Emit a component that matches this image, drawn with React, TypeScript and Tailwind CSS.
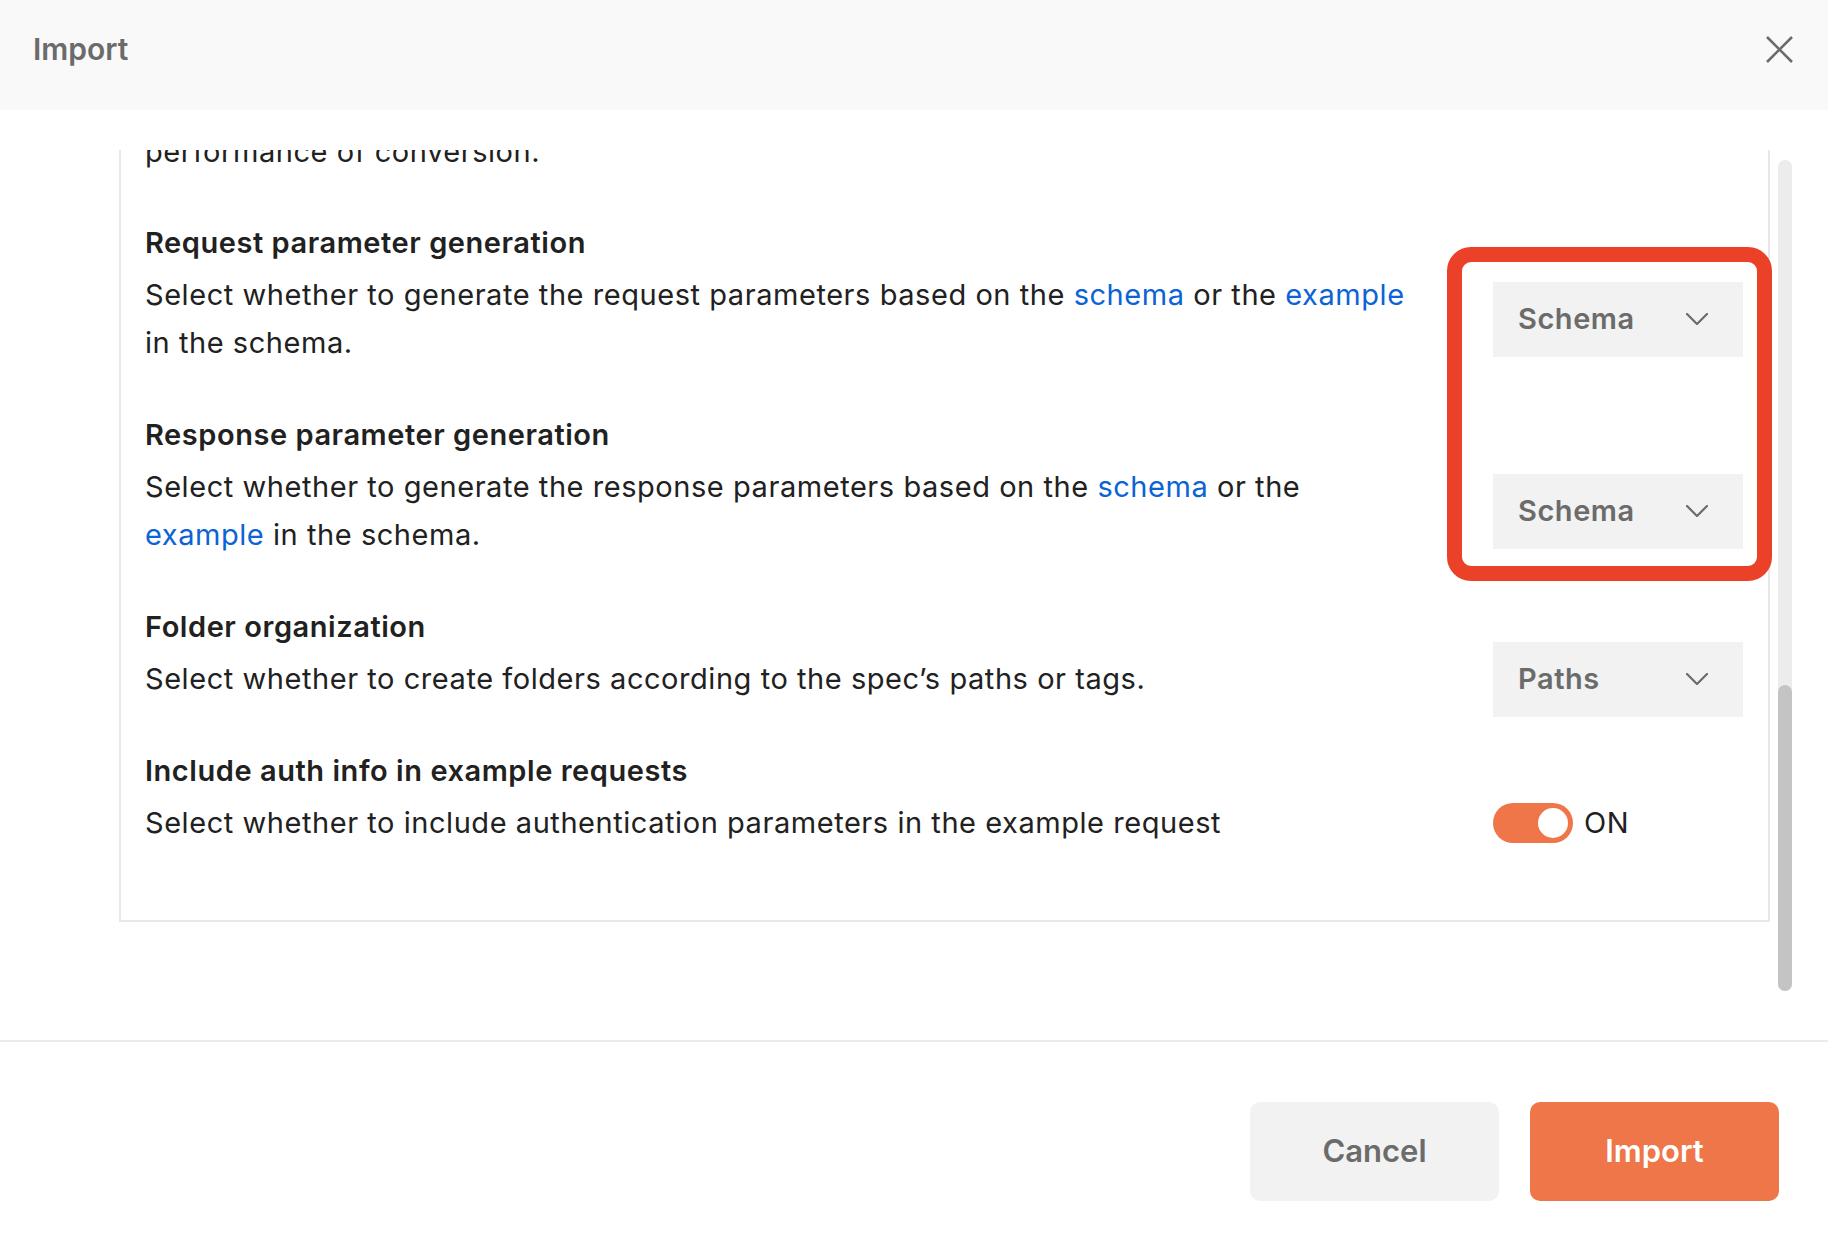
import React from "react";

function Chevron() {
  return (
    <svg width="22" height="12" viewBox="0 0 22 12" fill="none">
      <path d="M1 1 L11 11 L21 1" stroke="#6b6b6b" strokeWidth="2.2" strokeLinecap="round" strokeLinejoin="round" />
    </svg>
  );
}

function Dropdown({ label }: { label: string }) {
  return (
    <div className="flex h-[75px] w-[250px] items-center justify-between bg-[#f2f2f2] pl-[25px] pr-[35px]">
      <span className="text-[29px] font-semibold tracking-[0.55px] text-[#6b6b6b]">{label}</span>
      <Chevron />
    </div>
  );
}

function Link({ children }: { children: React.ReactNode }) {
  return <span className="text-[#0b63d6]">{children}</span>;
}

function Row({
  title,
  children,
  control,
}: {
  title: string;
  children: React.ReactNode;
  control: React.ReactNode;
}) {
  return (
    <div className="flex items-center">
      <div className="w-[1268px] pb-12">
        <div className="text-[29px] font-semibold leading-[40px] tracking-[0.55px] text-[#212121]">{title}</div>
        <div className="mt-2 text-[29px] leading-[48px] tracking-[0.55px] text-[#212121]">{children}</div>
      </div>
      <div className="flex-1" />
      <div className="w-[250px]">{control}</div>
    </div>
  );
}

export default function App() {
  return (
    <div className="relative h-[1250px] w-full overflow-hidden bg-white font-['Inter','Noto_Sans',sans-serif]">
      {/* Header */}
      <div className="flex h-[110px] items-center justify-between bg-[#f9f9f9] pb-[12px] pl-[33px] pr-[35px]">
        <span className="text-[30px] font-semibold text-[#6b6b6b]">Import</span>
        <svg width="27" height="27" viewBox="0 0 27 27" fill="none">
          <path d="M1 1 L26 26 M26 1 L1 26" stroke="#6b6b6b" strokeWidth="2.6" />
        </svg>
      </div>

      {/* Scroll area */}
      <div className="mt-10 h-[890px] overflow-hidden pl-[119px] pr-[58px]">
        <div className="-mt-[22px] border-2 border-t-0 border-[#e8e8e8] pb-[25px] pl-[24px] pr-[25px]">
          <div className="pb-[47px] text-[29px] leading-[48px] tracking-[0.55px] text-[#212121]">performance of conversion.</div>
          <Row
            title="Request parameter generation"
            control={<Dropdown label="Schema" />}
          >
            Select whether to generate the request parameters based on the <Link>schema</Link> or the{" "}
            <Link>example</Link> in the schema.
          </Row>
          <Row
            title="Response parameter generation"
            control={<Dropdown label="Schema" />}
          >
            Select whether to generate the response parameters based on the <Link>schema</Link> or the{" "}
            <Link>example</Link> in the schema.
          </Row>
          <Row title="Folder organization" control={<Dropdown label="Paths" />}>
            Select whether to create folders according to the spec’s paths or tags.
          </Row>
          <Row
            title="Include auth info in example requests"
            control={
              <div className="flex items-center">
                <div className="flex h-[40px] w-[80px] items-center justify-end rounded-full bg-[#ee7649] pr-[5px]">
                  <div className="h-[30px] w-[30px] rounded-full bg-white" />
                </div>
                <span className="ml-[11px] text-[29px] tracking-[0.55px] text-[#212121]">ON</span>
              </div>
            }
          >
            Select whether to include authentication parameters in the example request
          </Row>
        </div>
      </div>

      {/* Footer */}
      <div className="flex justify-end gap-[31px] border-t-2 border-[#ebebeb] pr-[49px] pt-[60px]">
        <button className="h-[99px] w-[249px] rounded-[10px] bg-[#f2f2f2] text-[31px] font-semibold text-[#6b6b6b]">
          Cancel
        </button>
        <button className="h-[99px] w-[249px] rounded-[10px] bg-[#ee7649] text-[31px] font-semibold text-white">
          Import
        </button>
      </div>

      {/* Scrollbar overlay */}
      <div className="absolute left-[1778px] top-[160px] h-[831px] w-[14px] rounded-full bg-[#ececec]">
        <div className="absolute left-0 top-[525px] h-[306px] w-[14px] rounded-full bg-[#c4c4c4]" />
      </div>

      {/* Red highlight annotation */}
      <div className="absolute left-[1447px] top-[247px] h-[334px] w-[325px] rounded-[24px] border-[15px] border-[#eb4129]" />
    </div>
  );
}
